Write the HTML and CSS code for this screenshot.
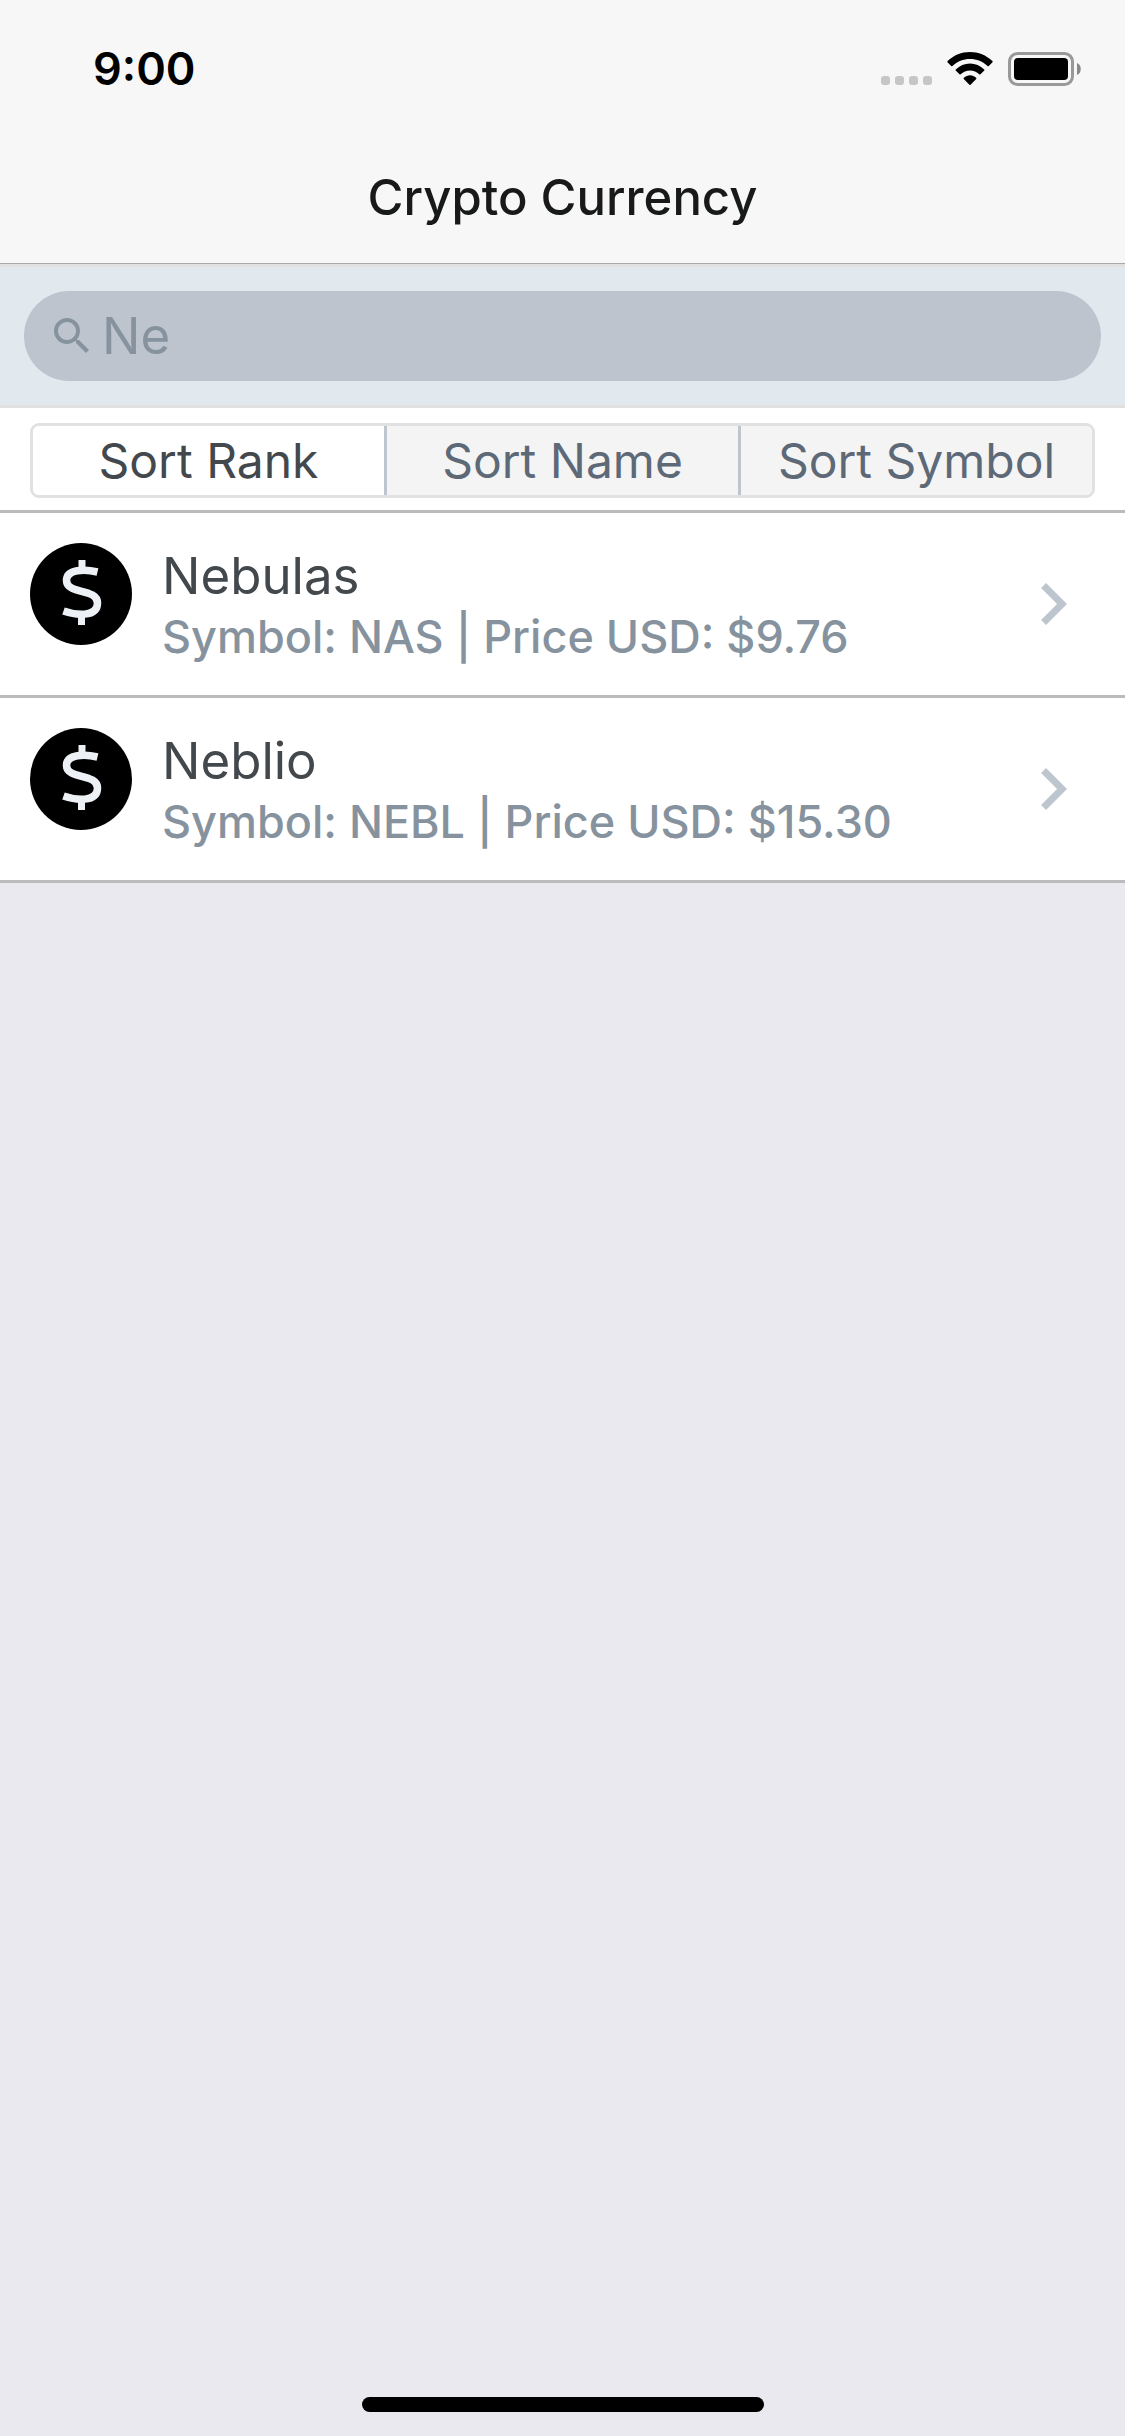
FILE: index.html
```html
<!DOCTYPE html>
<html lang="en">
<head>
<meta charset="utf-8">
<meta name="viewport" content="width=device-width, initial-scale=1">
<title>Crypto Currency</title>
<link rel="stylesheet" href="styles.css">
</head>
<body>
<header class="header">
  <div class="status">
    <time class="status-time">9:00</time>
    <div class="status-icons">
      <svg class="signal" viewBox="0 0 51 34" aria-hidden="true">
        <rect x="0" y="24" width="9" height="9" rx="3"/><rect x="14" y="24" width="9" height="9" rx="3"/><rect x="28" y="24" width="9" height="9" rx="3"/><rect x="42" y="24" width="9" height="9" rx="3"/>
      </svg>
      <svg class="wifi" viewBox="0 0 46 34" aria-hidden="true">
        <path d="M0.500 10.200Q0 9.600 .6 9C6.800 3.200 14.600 0 23 0S39.200 3.200 45.400 9Q46 9.600 45.500 10.200L41.800 14Q41.200 14.500 40.600 14C35.800 9.500 29.700 7 23 7S10.200 9.500 5.400 14Q4.800 14.500 4.200 14Z"/>
        <path d="M8.700 18.600Q8.200 18 8.800 17.400C12.700 13.700 17.600 11.500 23 11.500S33.300 13.700 37.200 17.400Q37.800 18 37.300 18.600L33.500 22.300Q32.900 22.800 32.300 22.300C29.800 19.900 26.600 18.500 23 18.500S16.200 19.900 13.700 22.300Q13.100 22.800 12.500 22.300Z"/>
        <path d="M16.800 27Q16.300 26.400 16.900 25.800C18.600 24.200 20.700 23.300 23 23.300S27.400 24.200 29.100 25.800Q29.700 26.400 29.200 27L23.600 32.700Q23 33.200 22.400 32.700Z"/>
      </svg>
      <svg class="battery" viewBox="0 0 73 34" aria-hidden="true">
        <rect x="1.500" y="1.500" width="63" height="31" rx="8" fill="none" stroke="#999" stroke-width="3"/>
        <rect x="6" y="6" width="54" height="22" rx="4"/>
        <path d="M69 11c5 1.500 5 10.500 0 12z" fill="#888"/>
      </svg>
    </div>
  </div>
  <h1 class="title">Crypto Currency</h1>
</header>
<main>
  <form class="search">
    <label class="search-field">
      <svg class="search-icon" viewBox="0 0 24 24" aria-hidden="true"><path d="M15.500 14h-.79l-.28-.27A6.471 6.471 0 0 0 16 9.500 6.500 6.500 0 1 0 9.500 16c1.610 0 3.090-.59 4.230-1.570l.27.28v.79l5 4.990L20.490 19l-4.990-5zm-6 0C7.010 14 5 11.990 5 9.500S7.010 5 9.500 5 14 7.010 14 9.500 11.990 14 9.500 14z"/></svg>
      <input class="search-input" type="text" value="Ne" aria-label="Search currencies">
    </label>
  </form>
  <div class="sort">
    <div class="segments" role="group" aria-label="Sort by">
      <button class="segment segment-active" type="button" aria-pressed="true">Sort Rank</button>
      <button class="segment" type="button" aria-pressed="false">Sort Name</button>
      <button class="segment" type="button" aria-pressed="false">Sort Symbol</button>
    </div>
  </div>
  <ul class="list">
    <li><a class="row" href="#nebulas">
      <svg class="coin" viewBox="0 0 102 102" aria-hidden="true"><circle cx="51" cy="51" r="51"/><g fill="none" stroke="#edf1f5" stroke-width="7"><path d="M52 17v11M51.500 72v10"/><path stroke-width="7.500" d="M67.500 29C55 26 36.500 26 36.500 37.500C36.500 51.500 67.500 45 67.500 60C67.500 75 45 72 33.500 68"/></g></svg>
      <div class="row-text"><div class="name">Nebulas</div><div class="detail">Symbol: NAS | Price USD: $9.76</div></div>
      <svg class="chevron" viewBox="0 0 24 24" aria-hidden="true"><path d="M10 6L8.590 7.410 13.170 12l-4.580 4.590L10 18l6-6z"/></svg>
    </a></li>
    <li><a class="row" href="#neblio">
      <svg class="coin" viewBox="0 0 102 102" aria-hidden="true"><circle cx="51" cy="51" r="51"/><g fill="none" stroke="#edf1f5" stroke-width="7"><path d="M52 17v11M51.500 72v10"/><path stroke-width="7.500" d="M67.500 29C55 26 36.500 26 36.500 37.500C36.500 51.500 67.500 45 67.500 60C67.500 75 45 72 33.500 68"/></g></svg>
      <div class="row-text"><div class="name">Neblio</div><div class="detail">Symbol: NEBL | Price USD: $15.30</div></div>
      <svg class="chevron" viewBox="0 0 24 24" aria-hidden="true"><path d="M10 6L8.590 7.410 13.170 12l-4.580 4.590L10 18l6-6z"/></svg>
    </a></li>
  </ul>
</main>
<div class="home-bar"></div>
</body>
</html>
```
FILE: styles.css
```css
* { box-sizing: border-box; }

body {
  margin: 0;
  min-height: 100vh;
  display: flex;
  flex-direction: column;
  background: #e9e9ef;
  font-family: Inter, "Liberation Sans", sans-serif;
}

.header {
  background: #f7f7f7;
  border-bottom: 1px solid #a9a9ab;
}

.status {
  height: 132px;
  padding: 6px 44px 0 93px;
  display: flex;
  align-items: center;
  justify-content: space-between;
}

.status-time {
  font-size: 45px;
  font-weight: 600;
  line-height: 60px;
}

.status-icons { display: flex; gap: 15px; }
.signal { width: 51px; height: 34px; fill: #c6c6c6; }
.wifi { width: 46px; height: 34px; }
.battery { width: 73px; height: 34px; }

.title {
  margin: 0;
  height: 131px;
  color: #181919;
  font-size: 49px;
  font-weight: 500;
  line-height: 132px;
  text-align: center;
}

.search {
  padding: 24px;
  background: #e1e8ee;
  border: solid #e1e1e1;
  border-width: 3px 0;
}

.search-field {
  display: flex;
  align-items: center;
  gap: 6px;
  height: 90px;
  padding: 0 24px;
  border-radius: 45px;
  background: #bdc4ce;
}

.search-icon { width: 48px; height: 48px; flex: none; fill: #86939e; }

.search-input {
  flex: 1;
  min-width: 0;
  padding: 0;
  border: 0;
  outline: 0;
  background: none;
  color: #86939e;
  font: 400 51px/60px Inter, "Liberation Sans", sans-serif;
}

.sort {
  padding: 15px 30px 12px;
  background: #fff;
}

.segments {
  display: flex;
  height: 75px;
  border: 3px solid #e1e1e1;
  border-radius: 9px;
  overflow: hidden;
}

.segment {
  flex: 1;
  padding: 0;
  border: 0;
  background: #f4f4f4;
  color: #5e6977;
  font: 400 48px/66px Inter, "Liberation Sans", sans-serif;
}

.segment + .segment { border-left: 3px solid #bdc6cf; }
.segment-active { background: #fff; color: #43484d; }

.list {
  margin: 0;
  padding: 0;
  list-style: none;
  border-top: 3px solid #bbb;
}

.row {
  display: flex;
  align-items: center;
  padding: 30px;
  background: #fff;
  border-bottom: 3px solid #bbb;
  text-decoration: none;
}

.coin { width: 102px; height: 102px; flex: none; align-self: flex-start; }

.row-text {
  flex: 1;
  padding-left: 30px;
}

.name {
  color: #43484d;
  font-size: 51px;
  line-height: 66px;
}

.detail {
  color: #86939e;
  font-size: 45px;
  font-weight: 500;
  line-height: 56px;
}

.chevron { width: 84px; height: 84px; flex: none; fill: #bdc6cf; }

.home-bar {
  width: 402px;
  height: 15px;
  margin: auto auto 24px;
  border-radius: 8px;
  background: #000;
}
```
